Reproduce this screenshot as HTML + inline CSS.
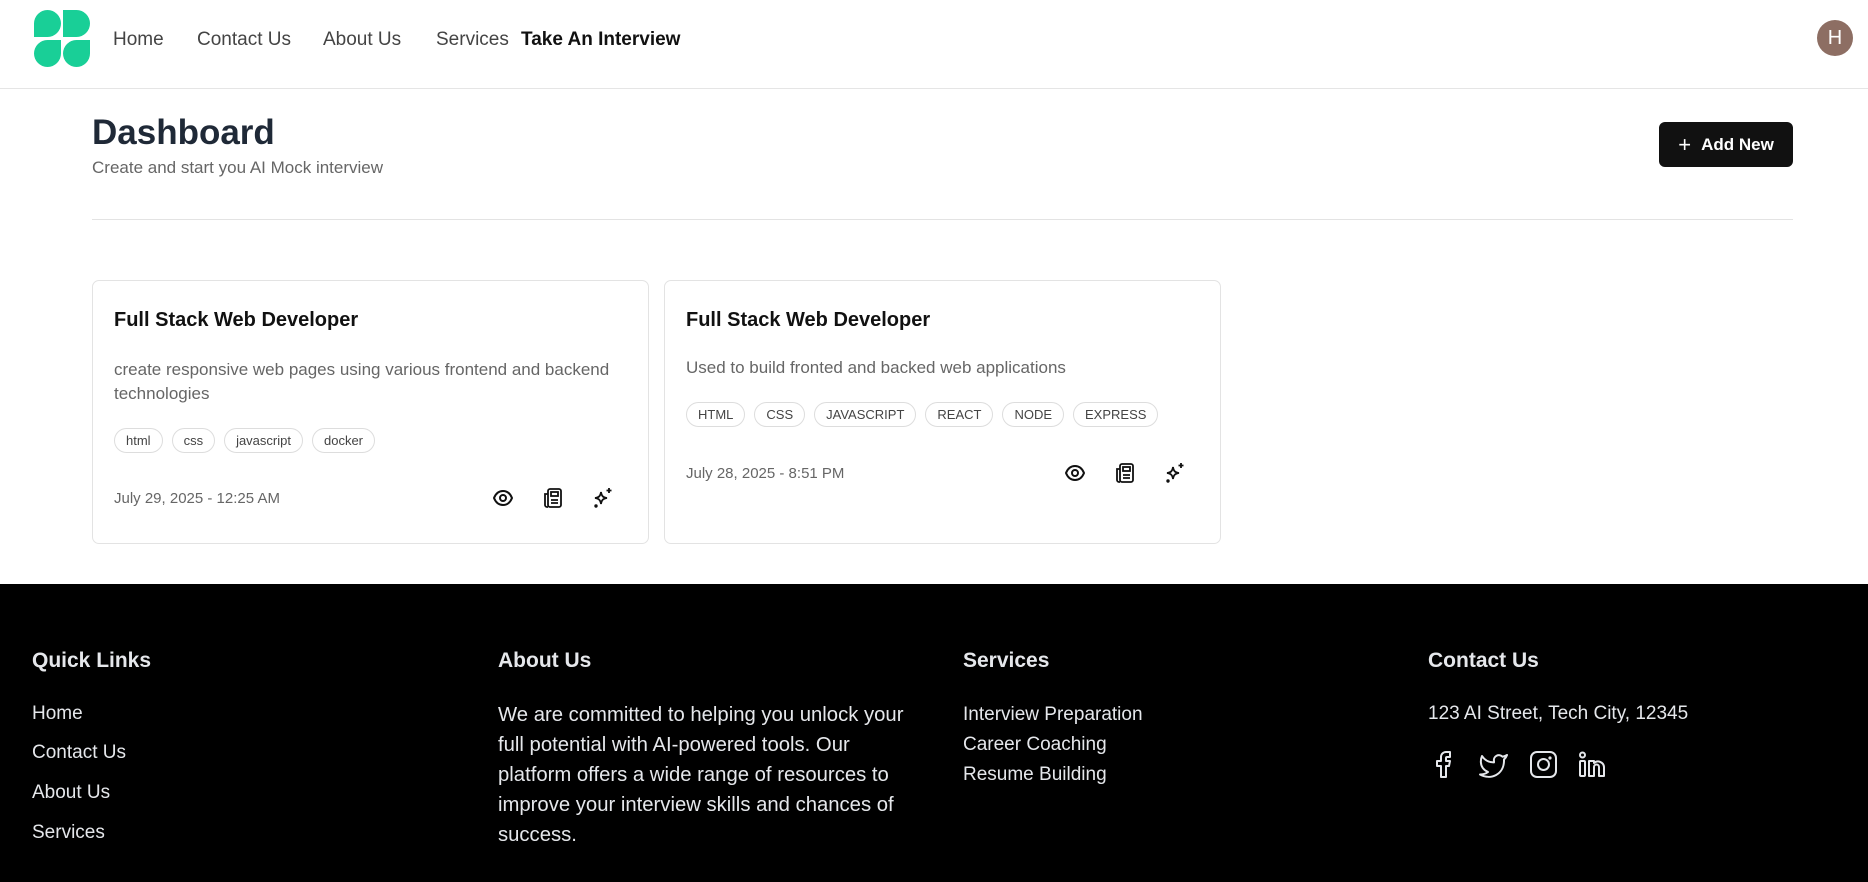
<!DOCTYPE html>
<html><head><meta charset="utf-8"><style>
*{box-sizing:border-box;margin:0;padding:0}
body{width:1868px;height:882px;overflow:hidden;font-family:"Liberation Sans",sans-serif;background:#fff;position:relative;color:#111}
.a{position:absolute;white-space:nowrap}
nav{position:absolute;left:0;top:0;width:1868px;height:89px;border-bottom:1px solid #e5e5e5}
.nl{font-size:19px;color:#444;top:29px}
.card{position:absolute;border:1px solid #e3e3e3;border-radius:7px;top:280px;height:264px}
.tag{display:inline-block;border:1px solid #ddd;border-radius:14px;font-size:13px;color:#444;padding:0 11px;height:25px;line-height:23px;margin-right:9px}
.ic{position:absolute;width:22px;height:22px}
.q{position:absolute;width:27px;height:27px;background:#19cf97}
footer{position:absolute;left:0;top:584px;width:1868px;height:298px;background:#000;color:#e5e7eb}
footer h3{position:absolute;font-size:21px;top:65px}
footer .l{position:absolute;font-size:19px;white-space:nowrap}
</style></head><body>
<nav>
<div class="q" style="left:34px;top:10px;border-radius:14px 14px 14px 0"></div>
<div class="q" style="left:63px;top:10px;border-radius:0 14px 14px 0"></div>
<div class="q" style="left:34px;top:40px;border-radius:14px 0 14px 14px"></div>
<div class="q" style="left:63px;top:40px;border-radius:14px 0 14px 14px"></div>
<div class="a nl" style="left:113px">Home</div>
<div class="a nl" style="left:197px">Contact Us</div>
<div class="a nl" style="left:323px">About Us</div>
<div class="a nl" style="left:436px">Services</div>
<div class="a nl" style="left:521px;color:#111;font-weight:bold">Take An Interview</div>
<div class="a" style="left:1817px;top:20px;width:36px;height:36px;border-radius:50%;background:#8d6e63;color:#fff;font-size:20px;text-align:center;line-height:36px">H</div>
</nav>
<div class="a" style="left:92px;top:113px;font-size:35px;font-weight:bold;color:#1f2937">Dashboard</div>
<div class="a" style="left:92px;top:158px;font-size:17px;color:#666">Create and start you AI Mock interview</div>
<div class="a" style="left:1659px;top:122px;width:134px;height:45px;background:#111;border-radius:6px;color:#fff;font-size:17px;font-weight:bold;line-height:45px;text-align:center"><span style="font-weight:normal;font-size:22px;margin-right:10px;vertical-align:-2px">+</span>Add New</div>
<div class="a" style="left:92px;top:219px;width:1701px;height:1px;background:#e3e3e3"></div>

<div class="card" style="left:92px;width:557px">
<div class="a" style="left:21px;top:28px;font-size:20px;font-weight:bold">Full Stack Web Developer</div>
<div class="a" style="left:21px;top:77px;font-size:17px;color:#666;line-height:24px;white-space:normal;width:520px">create responsive web pages using various frontend and backend technologies</div>
<div class="a" style="left:21px;top:147px"><span class="tag">html</span><span class="tag">css</span><span class="tag">javascript</span><span class="tag">docker</span></div>
<div class="a" style="left:21px;top:209px;font-size:15px;color:#666">July 29, 2025 - 12:25 AM</div>
</div>
<div class="card" style="left:664px;width:557px">
<div class="a" style="left:21px;top:28px;font-size:20px;font-weight:bold">Full Stack Web Developer</div>
<div class="a" style="left:21px;top:77px;font-size:17px;color:#666">Used to build fronted and backed web applications</div>
<div class="a" style="left:21px;top:121px"><span class="tag">HTML</span><span class="tag">CSS</span><span class="tag">JAVASCRIPT</span><span class="tag">REACT</span><span class="tag">NODE</span><span class="tag">EXPRESS</span></div>
<div class="a" style="left:21px;top:184px;font-size:15px;color:#666">July 28, 2025 - 8:51 PM</div>
</div>

<svg width="0" height="0" style="position:absolute"><defs>
<g id="eye" fill="none" stroke="#111" stroke-width="2"><path d="M2 11c2-5 5.5-7 9-7s7 2 9 7c-2 5-5.5 7-9 7s-7-2-9-7z"/><circle cx="11" cy="11" r="3"/></g>
<g id="doc" fill="none" stroke="#111" stroke-width="1.8"><rect x="6" y="2" width="13" height="18" rx="2"/><path d="M6 7H3v11a2 2 0 0 0 2 2h1"/><rect x="9" y="5" width="7" height="4"/><path d="M9 13h7M9 16h7"/></g>
<g id="spk" fill="none" stroke="#111" stroke-width="1.8"><path d="M9 5c.6 4 2 5.5 6 6-4 .6-5.4 2-6 6-.6-4-2-5.4-6-6 4-.5 5.4-2 6-6z"/><path d="M17 1v5M14.5 3.5h5"/><circle cx="4" cy="19" r=".8" fill="#111"/></g>
</defs></svg>
<svg class="ic" style="left:492px;top:487px" viewBox="0 0 22 22"><use href="#eye"/></svg>
<svg class="ic" style="left:542px;top:487px" viewBox="0 0 22 22"><use href="#doc"/></svg>
<svg class="ic" style="left:592px;top:487px" viewBox="0 0 22 22"><use href="#spk"/></svg>
<svg class="ic" style="left:1064px;top:462px" viewBox="0 0 22 22"><use href="#eye"/></svg>
<svg class="ic" style="left:1114px;top:462px" viewBox="0 0 22 22"><use href="#doc"/></svg>
<svg class="ic" style="left:1164px;top:462px" viewBox="0 0 22 22"><use href="#spk"/></svg>

<footer>
<h3 style="left:32px">Quick Links</h3>
<div class="l" style="left:32px;top:119px">Home</div>
<div class="l" style="left:32px;top:158px">Contact Us</div>
<div class="l" style="left:32px;top:198px">About Us</div>
<div class="l" style="left:32px;top:238px">Services</div>
<h3 style="left:498px">About Us</h3>
<div class="l" style="left:498px;top:116px;white-space:normal;width:412px;line-height:30px;font-size:20.3px">We are committed to helping you unlock your full potential with AI-powered tools. Our platform offers a wide range of resources to improve your interview skills and chances of success.</div>
<h3 style="left:963px">Services</h3>
<div class="l" style="left:963px;top:116px;line-height:30px">Interview Preparation<br>Career Coaching<br>Resume Building</div>
<h3 style="left:1428px">Contact Us</h3>
<div class="l" style="left:1428px;top:119px">123 AI Street, Tech City, 12345</div>
<svg class="a" style="left:1428px;top:164px" width="200" height="32" viewBox="0 0 200 32" fill="none" stroke="#e5e7eb" stroke-width="2" stroke-linecap="round" stroke-linejoin="round">
<path d="M13 29V18H9v-5h4V9a5 5 0 0 1 5-5h4v5h-3a1 1 0 0 0-1 1v3h4l-1 5h-3v11z"/>
<path d="M79 7c-1.5 1-3 1.5-4.5 1.7a5 5 0 0 0-8.5 4.5v1.2C61 14.5 56.5 12 54 8c0 0-5 11 6 16-2 1.5-5 2.5-8 2.5 11 6 24 0 24-14v-1c1.2-1.2 2.5-3 3-4.5z"/>
<rect x="103" y="4" width="25" height="25" rx="6"/><circle cx="115.5" cy="16.5" r="5.5"/><circle cx="122" cy="10" r=".6" fill="#e5e7eb"/>
<rect x="152" y="13" width="5" height="15" rx="1"/><circle cx="154.5" cy="7" r="2.5"/><path d="M161 28V13h5v2a6 6 0 0 1 10 4v9h-5v-9a2 2 0 0 0-5 0v9z"/>
</svg>
</footer>
</body></html>
